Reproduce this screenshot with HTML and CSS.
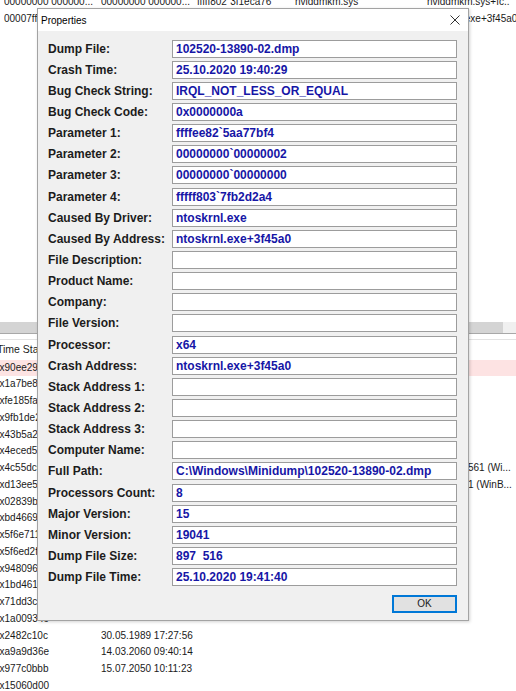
FILE: index.html
```html
<!DOCTYPE html>
<html>
<head>
<meta charset="utf-8">
<title>Properties</title>
<link rel="stylesheet" href="styles.css">
</head>
<body>
<div class="screen">
  <div class="top-pane">
    <div class="top-list">
      <div class="trow"><span>00000000 000000...</span><span>00000000 000000...</span><span>fffff802`3f1eca76</span><span>nvlddmkm.sys</span><span>nvlddmkm.sys+fc..</span></div>
      <div class="trow"><span class="narrow">00007ff</span><span></span><span></span><span></span><span>ntoskrnl.exe+3f45a0</span></div>
    </div>
  </div>
  <div class="hscroll"><div class="thumb"></div></div>
  <div class="splitter"></div>
  <div class="bottom-pane">
    <div class="bheader"><span>Time Stamp</span></div>
    <div class="brow selected"><span>0x90ee2936</span><span></span><span></span></div>
    <div class="brow"><span>0x1a7be84f</span><span></span><span></span></div>
    <div class="brow"><span>0xfe185fa1</span><span></span><span></span></div>
    <div class="brow"><span>0x9fb1de27</span><span></span><span></span></div>
    <div class="brow"><span>0x43b5a2c0</span><span></span><span></span></div>
    <div class="brow"><span>0x4eced5e2</span><span></span><span></span></div>
    <div class="brow"><span>0x4c55dc61</span><span></span><span>561 (Wi...</span></div>
    <div class="brow"><span>0xd13ee5b4</span><span></span><span>1 (WinB...</span></div>
    <div class="brow"><span>0x02839b7e</span><span></span><span></span></div>
    <div class="brow"><span>0xbd46694a</span><span></span><span></span></div>
    <div class="brow"><span>0x5f6e7113</span><span></span><span></span></div>
    <div class="brow"><span>0x5f6ed2f8</span><span></span><span></span></div>
    <div class="brow"><span>0x948096d5</span><span></span><span></span></div>
    <div class="brow"><span>0x1bd4618c</span><span></span><span></span></div>
    <div class="brow"><span>0x71dd3c09</span><span></span><span></span></div>
    <div class="brow"><span>0x1a00934c</span><span></span><span></span></div>
    <div class="brow"><span>0x2482c10c</span><span>30.05.1989 17:27:56</span><span></span></div>
    <div class="brow"><span>0xa9a9d36e</span><span>14.03.2060 09:40:14</span><span></span></div>
    <div class="brow"><span>0x977c0bbb</span><span>15.07.2050 10:11:23</span><span></span></div>
    <div class="brow"><span>0x15060d00</span><span></span><span></span></div>
  </div>

  <div class="dialog">
    <div class="titlebar">
      <span class="title">Properties</span>
      <svg class="close" width="10" height="10" viewBox="0 0 10 10"><path d="M0.5 0.5 L9.5 9.5 M9.5 0.5 L0.5 9.5" stroke="#333" stroke-width="1" fill="none"/></svg>
    </div>
    <div class="dbody">
      <div class="fields">
        <span class="lbl">Dump File:</span><span class="val">102520-13890-02.dmp</span>
        <span class="lbl">Crash Time:</span><span class="val">25.10.2020 19:40:29</span>
        <span class="lbl">Bug Check String:</span><span class="val">IRQL_NOT_LESS_OR_EQUAL</span>
        <span class="lbl">Bug Check Code:</span><span class="val">0x0000000a</span>
        <span class="lbl">Parameter 1:</span><span class="val">ffffee82`5aa77bf4</span>
        <span class="lbl">Parameter 2:</span><span class="val">00000000`00000002</span>
        <span class="lbl">Parameter 3:</span><span class="val">00000000`00000000</span>
        <span class="lbl">Parameter 4:</span><span class="val">fffff803`7fb2d2a4</span>
        <span class="lbl">Caused By Driver:</span><span class="val">ntoskrnl.exe</span>
        <span class="lbl">Caused By Address:</span><span class="val">ntoskrnl.exe+3f45a0</span>
        <span class="lbl">File Description:</span><span class="val"></span>
        <span class="lbl">Product Name:</span><span class="val"></span>
        <span class="lbl">Company:</span><span class="val"></span>
        <span class="lbl">File Version:</span><span class="val"></span>
        <span class="lbl">Processor:</span><span class="val">x64</span>
        <span class="lbl">Crash Address:</span><span class="val">ntoskrnl.exe+3f45a0</span>
        <span class="lbl">Stack Address 1:</span><span class="val"></span>
        <span class="lbl">Stack Address 2:</span><span class="val"></span>
        <span class="lbl">Stack Address 3:</span><span class="val"></span>
        <span class="lbl">Computer Name:</span><span class="val"></span>
        <span class="lbl">Full Path:</span><span class="val">C:\Windows\Minidump\102520-13890-02.dmp</span>
        <span class="lbl">Processors Count:</span><span class="val">8</span>
        <span class="lbl">Major Version:</span><span class="val">15</span>
        <span class="lbl">Minor Version:</span><span class="val">19041</span>
        <span class="lbl">Dump File Size:</span><span class="val">897&nbsp;&nbsp;516</span>
        <span class="lbl">Dump File Time:</span><span class="val">25.10.2020 19:41:40</span>
      </div>
      <div class="footer">
        <button class="ok">OK</button>
      </div>
    </div>
  </div>
</div>
</body>
</html>
```
FILE: styles.css
```css
html, body {
  margin: 0;
  padding: 0;
  background: #ffffff;
}
.screen {
  position: relative;
  width: 516px;
  height: 691px;
  overflow: hidden;
  font-family: "Liberation Sans", Arial, sans-serif;
  font-size: 10px;
  color: #1a1a1a;
}
.top-pane {
  height: 322px;
  overflow: hidden;
}
.top-list {
  margin-top: -7px;
  padding-left: 4px;
}
.trow {
  display: grid;
  grid-template-columns: 97px 96px 98px 132px 100px;
  height: 17px;
  line-height: 17px;
  white-space: nowrap;
}
.trow span {
  overflow: hidden;
}
.hscroll {
  height: 11px;
  background: #f0f0f0;
  display: flex;
}
.thumb {
  width: 503px;
  background: #d4d4d4;
}
.splitter {
  height: 5px;
  border-top: 1px solid #a8a8a8;
  border-bottom: 1px solid #e3e3e3;
  background: #ffffff;
}
.bottom-pane {
  margin-left: -6px;
}
.bheader {
  height: 19.5px;
  line-height: 19.5px;
  padding-left: 3px;
  font-size: 10.5px;
  white-space: nowrap;
}
.brow {
  display: grid;
  grid-template-columns: 107px 367px 60px;
  height: 16.75px;
  line-height: 16.75px;
  white-space: nowrap;
}
.brow span {
  overflow: hidden;
}
.brow.selected {
  background: #fde3e3;
}

/* dialog window */
.dialog {
  position: absolute;
  left: 37px;
  top: 8px;
  width: 432px;
  box-sizing: border-box;
  border: 1px solid #a3a3a3;
  background: #f0f0f0;
  box-shadow: 1px 1px 3px rgba(0, 0, 0, 0.18);
}
.titlebar {
  height: 22px;
  background: #ffffff;
  display: flex;
  align-items: center;
  justify-content: space-between;
  padding: 0 8px 0 3px;
}
.title {
  font-size: 10px;
  color: #000;
}
.close {
  display: block;
}
.dbody {
  padding: 7px 11px 7px 10px;
}
.fields {
  display: grid;
  grid-template-columns: 124px 285px;
  grid-auto-rows: 21.15px;
  align-items: center;
}
.lbl {
  font-weight: bold;
  font-size: 12px;
  color: #1c1c1c;
  white-space: nowrap;
}
.val {
  box-sizing: border-box;
  height: 18px;
  border: 1px solid #9c9c9c;
  background: #ffffff;
  padding-left: 3px;
  font-weight: bold;
  font-size: 12px;
  line-height: 16px;
  color: #1616a6;
  white-space: nowrap;
  overflow: hidden;
}
.footer {
  display: flex;
  justify-content: flex-end;
  margin-top: 7px;
}
.ok {
  width: 65px;
  height: 18px;
  box-sizing: border-box;
  border: 1px solid #0078d7;
  box-shadow: inset 0 0 0 1px #0078d7;
  background: #e1e1e1;
  font-family: "Liberation Sans", Arial, sans-serif;
  font-size: 10px;
  color: #1a1a1a;
  padding: 0;
  margin: 0;
}
```
